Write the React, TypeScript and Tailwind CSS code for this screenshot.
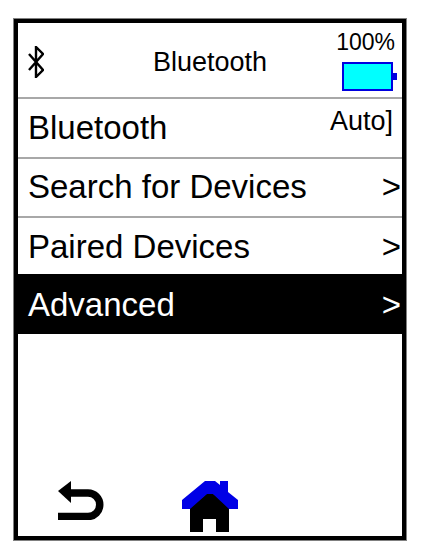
import React from "react";

type RowProps = {
  label: string;
  className: string;
};

function Row({ label, className }: RowProps) {
  return (
    <div className={"flex items-center justify-between pl-[10px] pr-[1px] " + className}>
      <span className="text-[33px] leading-none">{label}</span>
      <span className="text-[33px] leading-none">&gt;</span>
    </div>
  );
}

function BluetoothIcon() {
  return (
    <svg width="16" height="32" viewBox="0 0 16 32" fill="none" stroke="black" strokeWidth="2.4">
      <path d="M1 8 L15 24 L8 31 V1 L15 8 L1 24" />
    </svg>
  );
}

function Battery() {
  return (
    <svg width="55" height="29" viewBox="0 0 55 29">
      <rect x="1" y="1" width="49" height="27" fill="#00ffff" stroke="#0000e0" strokeWidth="2" />
      <rect x="51" y="11" width="4" height="7" fill="#0000e0" />
    </svg>
  );
}

function BackIcon() {
  return (
    <svg width="46" height="39" viewBox="0 0 46 39" fill="none">
      <path d="M0 10 L13 0 L13 22 Z" fill="black" />
      <path d="M10 12 H30 A 11.75 11.75 0 0 1 30 35.5 H0" stroke="black" strokeWidth="7.5" />
    </svg>
  );
}

function HomeIcon() {
  return (
    <svg width="57" height="52" viewBox="0 0 57 52">
      <path d="M8 26 L28 10 L47 26 V51 H34 V38 H21 V51 H8 Z" fill="black" />
      <path d="M0 19 L23 0 H33 L38 4 V0 H46 V11 L56 19 V28 H47 L31 13 H25 L8 28 H0 Z" fill="#0000e6" />
    </svg>
  );
}

export default function App() {
  return (
    <div className="h-[556px] w-[421px] bg-white px-[13px] pt-[18px] font-['Liberation_Sans',sans-serif]">
      <div className="flex h-[523px] w-[394px] flex-col border-[5px] border-black outline-1 -outline-offset-1 outline-[#808080]">
        <div className="grid h-[76px] grid-cols-[1fr_auto_1fr] items-center border-b-2 border-[#a8a8a8] pl-[10px] pr-[5px]">
          <div className="mt-[3px]">
            <BluetoothIcon />
          </div>
          <span className="mr-[5px] mt-[5px] text-[27px] leading-none text-black">Bluetooth</span>
          <div className="mt-[2px] flex flex-col items-end gap-[8px]">
            <span className="mr-[2px] text-[23px] leading-none text-black">100%</span>
            <Battery />
          </div>
        </div>
        <div className="flex h-[60px] items-center justify-between border-b-2 border-[#a8a8a8] pb-[2px] pl-[10px] pr-[9px]">
          <span className="text-[33px] leading-none text-black">Bluetooth</span>
          <span className="mb-[11px] text-[27px] leading-none text-black">Auto]</span>
        </div>
        <Row label="Search for Devices" className="h-[59px] border-b-2 border-[#a8a8a8] pb-[2px] text-black" />
        <Row label="Paired Devices" className="h-[56px] text-black" />
        <Row label="Advanced" className="h-[60px] bg-black text-white" />
        <div className="flex flex-1 items-end pb-[3px] pl-[40px]">
          <div className="mb-[13px]">
            <BackIcon />
          </div>
          <div className="ml-[78px]">
            <HomeIcon />
          </div>
        </div>
      </div>
    </div>
  );
}
